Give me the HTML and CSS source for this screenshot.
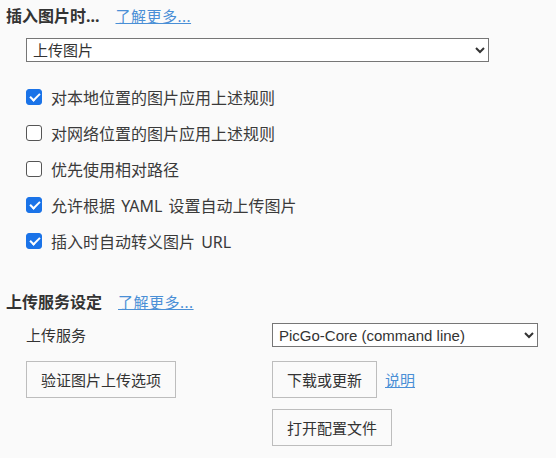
FILE: index.html
```html
<!DOCTYPE html>
<html lang="zh-CN">
<head>
<meta charset="utf-8">
<title>图像</title>
<link rel="stylesheet" href="styles.css">
</head>
<body>
<section class="group">
  <div class="group-head">
    <span class="group-title">插入图片时...</span>
    <a class="more" href="#">了解更多...</a>
  </div>
  <div class="indent">
    <select class="sel sel-wide">
      <option>上传图片</option>
    </select>
  </div>
  <ul class="checks">
    <li class="check-row"><input class="cb" type="checkbox" checked><span>对本地位置的图片应用上述规则</span></li>
    <li class="check-row"><input class="cb" type="checkbox"><span>对网络位置的图片应用上述规则</span></li>
    <li class="check-row"><input class="cb" type="checkbox"><span>优先使用相对路径</span></li>
    <li class="check-row"><input class="cb" type="checkbox" checked><span>允许根据 YAML 设置自动上传图片</span></li>
    <li class="check-row"><input class="cb" type="checkbox" checked><span>插入时自动转义图片 URL</span></li>
  </ul>
</section>
<section class="group group-upload">
  <div class="group-head">
    <span class="group-title">上传服务设定</span>
    <a class="more" href="#">了解更多...</a>
  </div>
  <div class="form-row row-service">
    <div class="cell-left"><span class="label">上传服务</span></div>
    <div class="cell-right">
      <select class="sel sel-service">
        <option>PicGo-Core (command line)</option>
      </select>
    </div>
  </div>
  <div class="form-row row-actions">
    <div class="cell-left"><button class="btn">验证图片上传选项</button></div>
    <div class="cell-right"><button class="btn">下载或更新</button><a class="help" href="#">说明</a></div>
  </div>
  <div class="form-row row-config">
    <div class="cell-left"></div>
    <div class="cell-right"><button class="btn">打开配置文件</button></div>
  </div>
</section>
</body>
</html>
```
FILE: styles.css
```css
html, body {
  margin: 0;
  padding: 0;
  background: #fafafa;
}
body {
  font-family: "Noto Sans", "Noto Sans CJK SC", sans-serif;
  color: #333;
  width: 556px;
  height: 458px;
  overflow: hidden;
}
.group-head {
  display: flex;
  align-items: center;
  height: 22px;
  padding-left: 6px;
  gap: 16px;
}
.group:first-child .group-head {
  margin-top: 5px;
}
.group-title {
  font-size: 16px;
  font-weight: bold;
  line-height: 22px;
  color: #333;
}
.more {
  font-size: 15px;
  line-height: 22px;
  color: #4a8fd6;
  text-decoration: underline;
  letter-spacing: 0.5px;
}
.indent {
  padding-left: 26px;
  margin-top: 11px;
}
.sel {
  font-family: "Noto Sans", "Noto Sans CJK SC", sans-serif;
  font-size: 15px;
  color: #333;
  height: 24px;
  border: 1px solid #767676;
  border-radius: 0;
  background: #fff;
  padding: 0 2px;
  margin: 0;
  box-sizing: border-box;
  display: block;
}
.sel-wide {
  width: 463px;
}
.sel-service {
  width: 266px;
  font-family: "Liberation Sans", "Noto Sans CJK SC", sans-serif;
}
.checks {
  list-style: none;
  margin: 17px 0 0;
  padding: 0 0 0 26px;
}
.check-row {
  display: flex;
  align-items: center;
  height: 36px;
  gap: 9px;
  font-size: 16px;
  color: #3a3a3a;
  word-spacing: 2px;
}
.cb {
  -webkit-appearance: none;
  appearance: none;
  position: relative;
  flex: none;
  width: 16px;
  height: 16px;
  margin: 0;
  box-sizing: border-box;
  border: 1.5px solid #555;
  border-radius: 3px;
  background: #fff;
}
.cb:checked {
  background: #1a73e8;
  border-color: #1a73e8;
}
.cb:checked::after {
  content: "";
  position: absolute;
  left: 4.5px;
  top: 1px;
  width: 4px;
  height: 8px;
  border-right: 2.5px solid #fff;
  border-bottom: 2.5px solid #fff;
  transform: rotate(45deg);
}
.group-upload {
  margin-top: 32px;
}
.form-row {
  display: flex;
  padding-left: 26px;
}
.cell-left {
  width: 246px;
  flex: none;
}
.cell-right {
  display: flex;
  align-items: center;
  gap: 8px;
}
.row-service {
  margin-top: 10px;
  align-items: center;
}
.label {
  font-size: 15px;
}
.row-actions {
  margin-top: 14px;
}
.row-config {
  margin-top: 11px;
}
.btn {
  font-family: "Noto Sans", "Noto Sans CJK SC", sans-serif;
  font-size: 15px;
  color: #333;
  height: 37px;
  padding: 0 14px;
  border: 1px solid #bdbdbd;
  border-radius: 0;
  background: #fafafa;
  margin: 0;
}
.help {
  font-size: 15px;
  color: #4a8fd6;
  text-decoration: underline;
}
```
